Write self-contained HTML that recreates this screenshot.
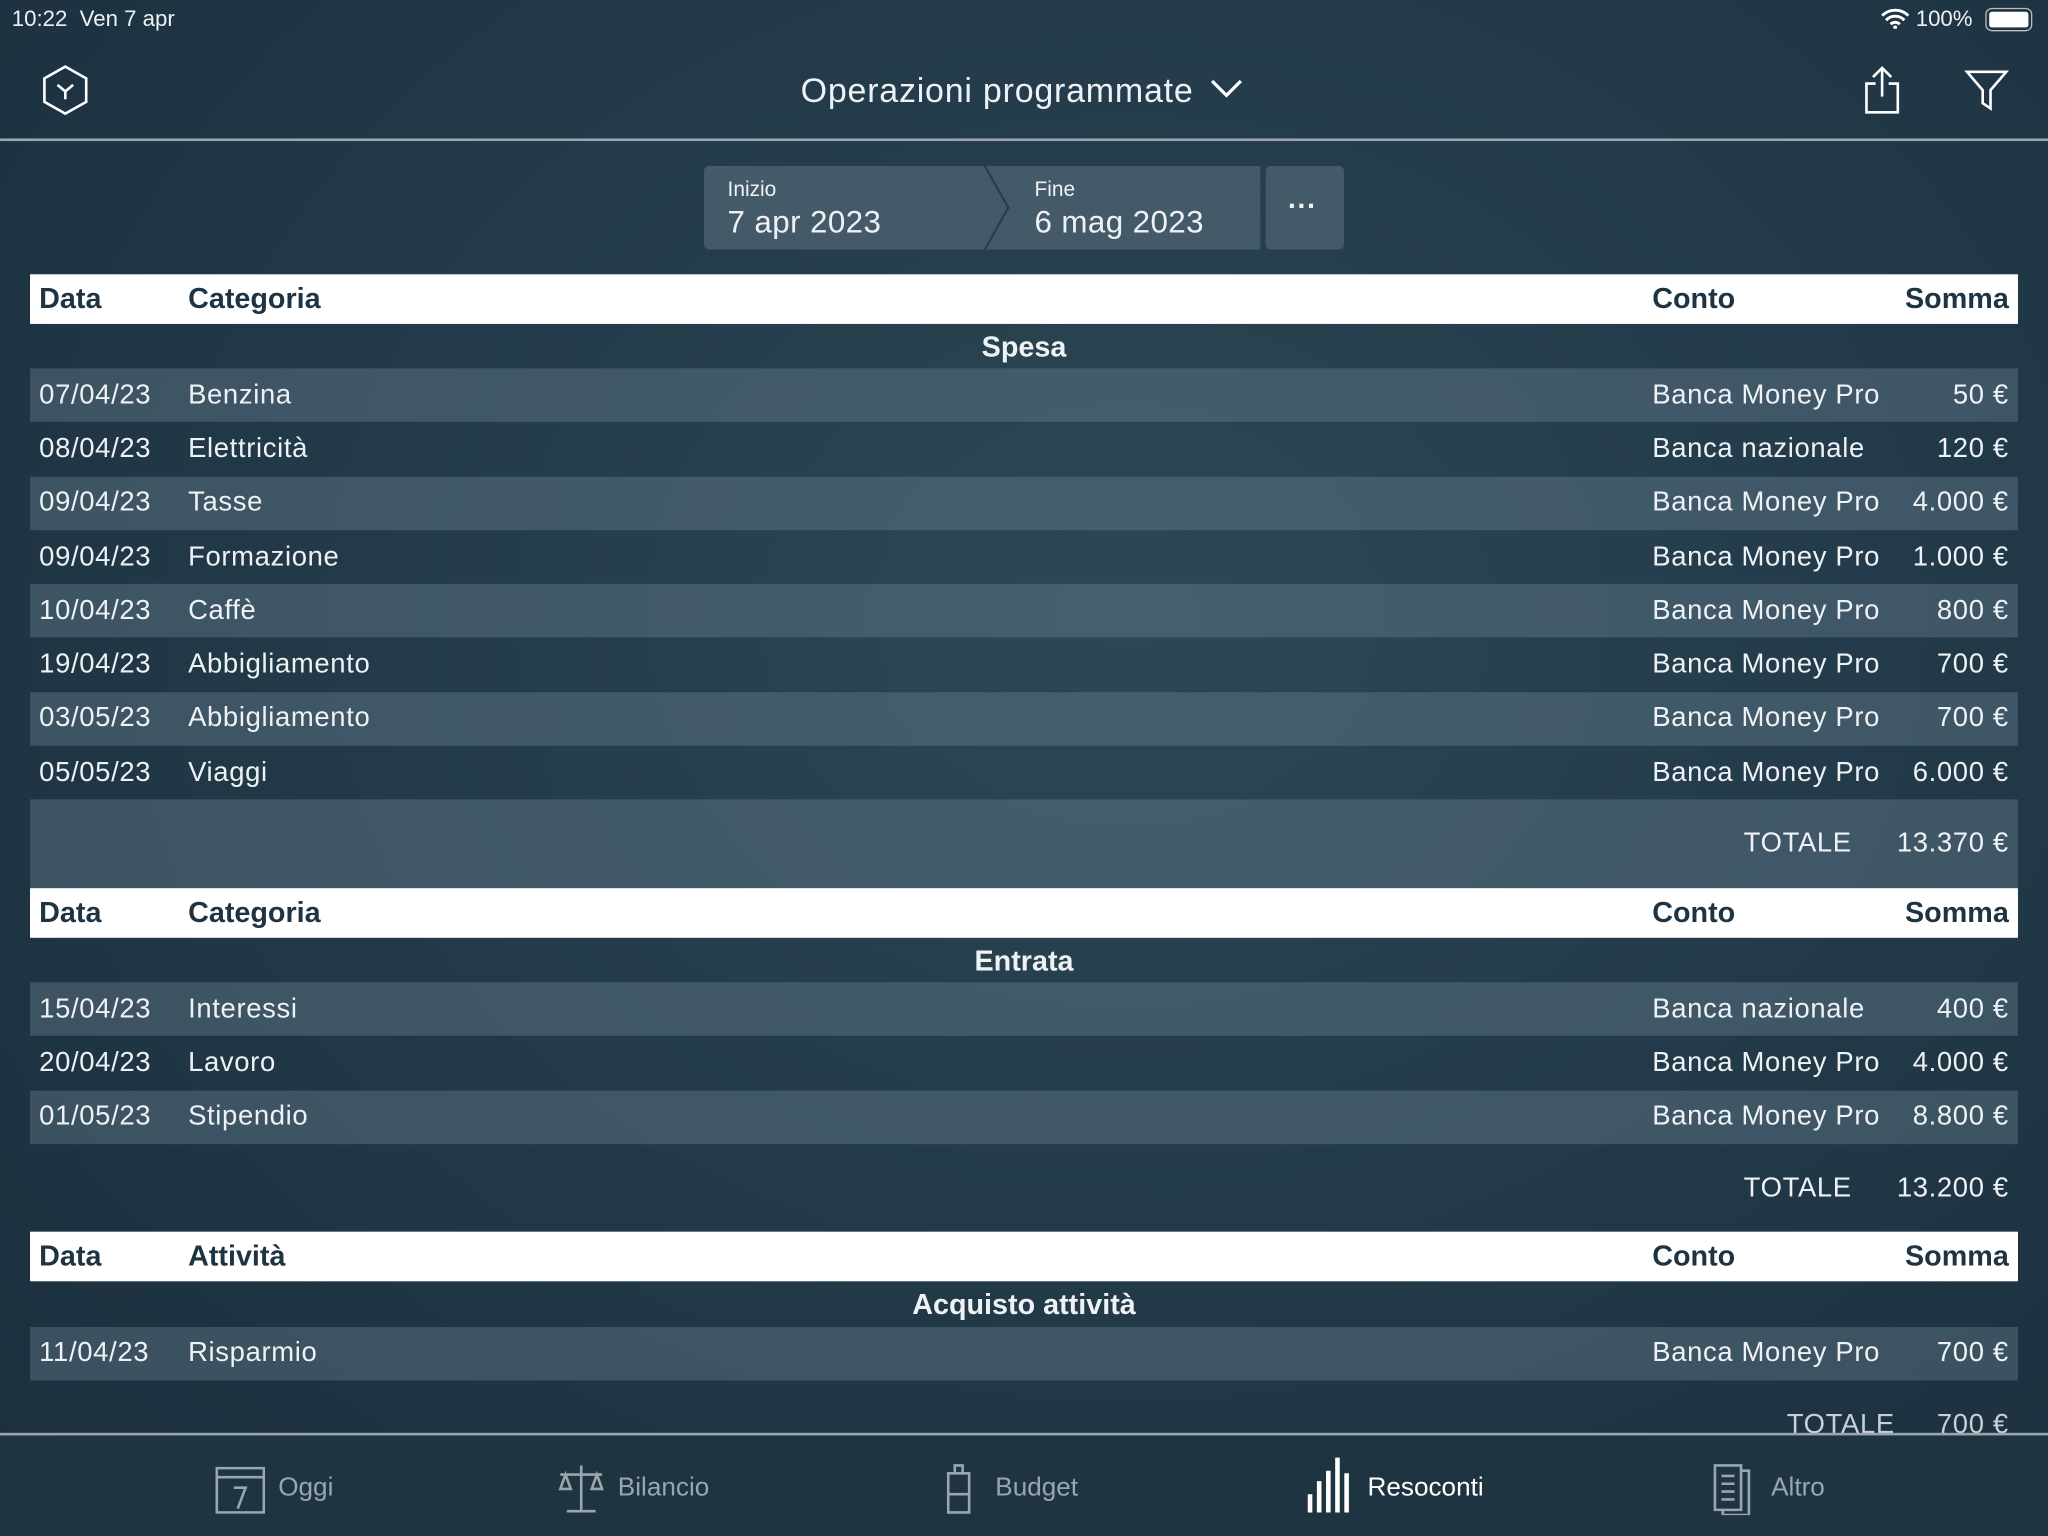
<!DOCTYPE html>
<html><head><meta charset="utf-8"><style>
html,body{margin:0;padding:0;width:2048px;height:1536px;overflow:hidden;background:#1d3140}
#w{position:absolute;left:0;top:0;width:1568px;height:1176px;transform:scale(1.306122);transform-origin:0 0;
background:radial-gradient(ellipse at 55% 40%,#2d4855 0%,#233b4a 45%,#1b2e3c 100%);
font-family:"Liberation Sans",sans-serif;color:#eef2f4;overflow:hidden}
.a{position:absolute;white-space:nowrap}
.hdr{position:absolute;left:23px;width:1522px;height:38px;background:#fff;color:#1f3443;font-weight:bold;font-size:22px}
.hdr span,.row span{position:absolute;top:50%;transform:translateY(-50%)}
.row{position:absolute;left:23px;width:1522px;height:41.3px;font-size:21px;letter-spacing:0.5px}
.l{background:rgba(110,135,150,0.38)}
.sec{position:absolute;left:0;width:1568px;text-align:center;font-weight:bold;font-size:22px}
.r{right:7px}
.tab{position:absolute;top:1128px;font-size:20px;color:#9aa5ac}
</style></head><body><div id="w">
<div class="a" style="left:9px;top:5px;font-size:17px">10:22&nbsp;&nbsp;Ven 7 apr</div>
<div class="a" style="left:1440px;top:5px;font-size:17px">
<svg width="22" height="16" viewBox="0 0 22 16" style="vertical-align:-2px"><path d="M1 6a14 14 0 0 1 20 0M4 9.5a9.5 9.5 0 0 1 14 0M7.5 12.5a5 5 0 0 1 7 0" stroke="#fff" stroke-width="2.2" fill="none"/><circle cx="11" cy="15" r="1.5" fill="#fff"/></svg> 100%</div>
<div class="a" style="left:1520px;top:6px;width:34px;height:16px;border:1.5px solid #bbb;border-radius:5px"><div style="margin:2px;height:12px;background:#fff;border-radius:2px"></div></div>
<svg class="a" style="left:30px;top:49px" width="40" height="40" viewBox="0 0 40 40"><path d="M20 2L36 11V29L20 38L4 29V11Z" fill="none" stroke="#fff" stroke-width="2"/><path d="M14 16L20 21L26 16M20 21V27" fill="none" stroke="#fff" stroke-width="2"/></svg>
<div class="a" style="left:613px;top:54px;font-size:26px;letter-spacing:0.6px">Operazioni programmate</div>
<svg class="a" style="left:926px;top:60px" width="26" height="16" viewBox="0 0 26 16"><path d="M2 2L13 13L24 2" stroke="#fff" stroke-width="2.5" fill="none"/></svg>
<svg class="a" style="left:1426px;top:50px" width="30" height="38" viewBox="0 0 30 38"><path d="M10 14H3V36H27V14H20M15 24V2M8 9L15 2L22 9" stroke="#fff" stroke-width="2" fill="none"/></svg>
<svg class="a" style="left:1504px;top:52px" width="34" height="34" viewBox="0 0 34 34"><path d="M2 3H32L20 17V31L14 27V17Z" stroke="#fff" stroke-width="2" fill="none"/></svg>
<div class="a" style="left:0;top:106px;width:1568px;height:2px;background:#9aa6ad"></div>
<svg class="a" style="left:539px;top:127px" width="490" height="64" viewBox="0 0 490 64"><path d="M4 0H214L232 32L214 64H4A4 4 0 0 1 0 60V4A4 4 0 0 1 4 0Z" fill="#455a68"/><path d="M216 0H426V64H216L234 32Z" fill="#455a68"/><rect x="430" y="0" width="60" height="64" rx="4" fill="#455a68"/></svg>
<div class="a" style="left:557px;top:137px;font-size:16px">Inizio</div>
<div class="a" style="left:557px;top:157px;font-size:24px;letter-spacing:0.3px">7 apr 2023</div>
<div class="a" style="left:792px;top:137px;font-size:16px">Fine</div>
<div class="a" style="left:792px;top:157px;font-size:24px;letter-spacing:0.3px">6 mag 2023</div>
<div class="a" style="left:986px;top:145px;font-size:22px;font-weight:bold">···</div>

<div class="hdr" style="top:210px"><span style="left:7px">Data</span><span style="left:121px">Categoria</span><span style="left:1242px">Conto</span><span class="r">Somma</span></div>
<div class="sec" style="top:253px">Spesa</div>
<div class="row l" style="top:282px"><span style="left:7px">07/04/23</span><span style="left:121px">Benzina</span><span style="left:1242px">Banca Money Pro</span><span class="r">50 €</span></div>
<div class="row" style="top:323.3px"><span style="left:7px">08/04/23</span><span style="left:121px">Elettricità</span><span style="left:1242px">Banca nazionale</span><span class="r">120 €</span></div>
<div class="row l" style="top:364.6px"><span style="left:7px">09/04/23</span><span style="left:121px">Tasse</span><span style="left:1242px">Banca Money Pro</span><span class="r">4.000 €</span></div>
<div class="row" style="top:405.9px"><span style="left:7px">09/04/23</span><span style="left:121px">Formazione</span><span style="left:1242px">Banca Money Pro</span><span class="r">1.000 €</span></div>
<div class="row l" style="top:447.2px"><span style="left:7px">10/04/23</span><span style="left:121px">Caffè</span><span style="left:1242px">Banca Money Pro</span><span class="r">800 €</span></div>
<div class="row" style="top:488.5px"><span style="left:7px">19/04/23</span><span style="left:121px">Abbigliamento</span><span style="left:1242px">Banca Money Pro</span><span class="r">700 €</span></div>
<div class="row l" style="top:529.8px"><span style="left:7px">03/05/23</span><span style="left:121px">Abbigliamento</span><span style="left:1242px">Banca Money Pro</span><span class="r">700 €</span></div>
<div class="row" style="top:571.1px"><span style="left:7px">05/05/23</span><span style="left:121px">Viaggi</span><span style="left:1242px">Banca Money Pro</span><span class="r">6.000 €</span></div>
<div class="row l" style="top:612.4px;height:67.6px"><span style="left:1312px;top:34px">TOTALE</span><span class="r" style="top:34px">13.370 €</span></div>

<div class="hdr" style="top:680px"><span style="left:7px">Data</span><span style="left:121px">Categoria</span><span style="left:1242px">Conto</span><span class="r">Somma</span></div>
<div class="sec" style="top:723px">Entrata</div>
<div class="row l" style="top:752px"><span style="left:7px">15/04/23</span><span style="left:121px">Interessi</span><span style="left:1242px">Banca nazionale</span><span class="r">400 €</span></div>
<div class="row" style="top:793.3px"><span style="left:7px">20/04/23</span><span style="left:121px">Lavoro</span><span style="left:1242px">Banca Money Pro</span><span class="r">4.000 €</span></div>
<div class="row l" style="top:834.6px"><span style="left:7px">01/05/23</span><span style="left:121px">Stipendio</span><span style="left:1242px">Banca Money Pro</span><span class="r">8.800 €</span></div>
<div class="row" style="top:889px"><span style="left:1312px">TOTALE</span><span class="r">13.200 €</span></div>

<div class="hdr" style="top:943px"><span style="left:7px">Data</span><span style="left:121px">Attività</span><span style="left:1242px">Conto</span><span class="r">Somma</span></div>
<div class="sec" style="top:986px">Acquisto attività</div>
<div class="row l" style="top:1015.5px"><span style="left:7px">11/04/23</span><span style="left:121px">Risparmio</span><span style="left:1242px">Banca Money Pro</span><span class="r">700 €</span></div>
<div class="row" style="top:1070px;color:#c8d0d4"><span style="left:1345px">TOTALE</span><span class="r">700 €</span></div>

<div class="a" style="left:0;top:1098px;width:1568px;height:78px;background:#1f3441"></div>
<div class="a" style="left:0;top:1097px;width:1568px;height:2px;background:#9aa6ad"></div>
<svg class="a" style="left:165px;top:1123px" width="38" height="36" viewBox="0 0 38 36"><rect x="1" y="1" width="36" height="34" fill="none" stroke="#9aa5ac" stroke-width="2"/><path d="M1 8H37M14 16H23L17 32" stroke="#9aa5ac" stroke-width="2" fill="none"/></svg>
<div class="tab" style="left:213px">Oggi</div>
<svg class="a" style="left:426px;top:1120px" width="38" height="40" viewBox="0 0 38 40"><path d="M19 2V36M8 37H30M3 9H35M7 9L3 20H11ZM31 9L27 20H35Z" stroke="#9aa5ac" stroke-width="2" fill="none"/></svg>
<div class="tab" style="left:473px">Bilancio</div>
<svg class="a" style="left:723px;top:1120px" width="22" height="40" viewBox="0 0 22 40"><path d="M8 2H14V8H8ZM3 8H19V38H3ZM3 24H19" stroke="#9aa5ac" stroke-width="2" fill="none"/></svg>
<div class="tab" style="left:762px">Budget</div>
<svg class="a" style="left:1000px;top:1114px" width="38" height="44" viewBox="0 0 38 44"><path d="M3 30V44M10 20V44M17 12V44M24 2V44M31 14V44" stroke="#fff" stroke-width="3.5"/></svg>
<div class="tab" style="left:1047px;color:#fff">Resoconti</div>
<svg class="a" style="left:1311px;top:1120px" width="32" height="40" viewBox="0 0 32 40"><path d="M2 2H22V36H2ZM22 6H28V40H8V36M7 10H17M7 16H17M7 22H17M7 28H17" stroke="#9aa5ac" stroke-width="2" fill="none"/></svg>
<div class="tab" style="left:1356px">Altro</div>
</div></body></html>
